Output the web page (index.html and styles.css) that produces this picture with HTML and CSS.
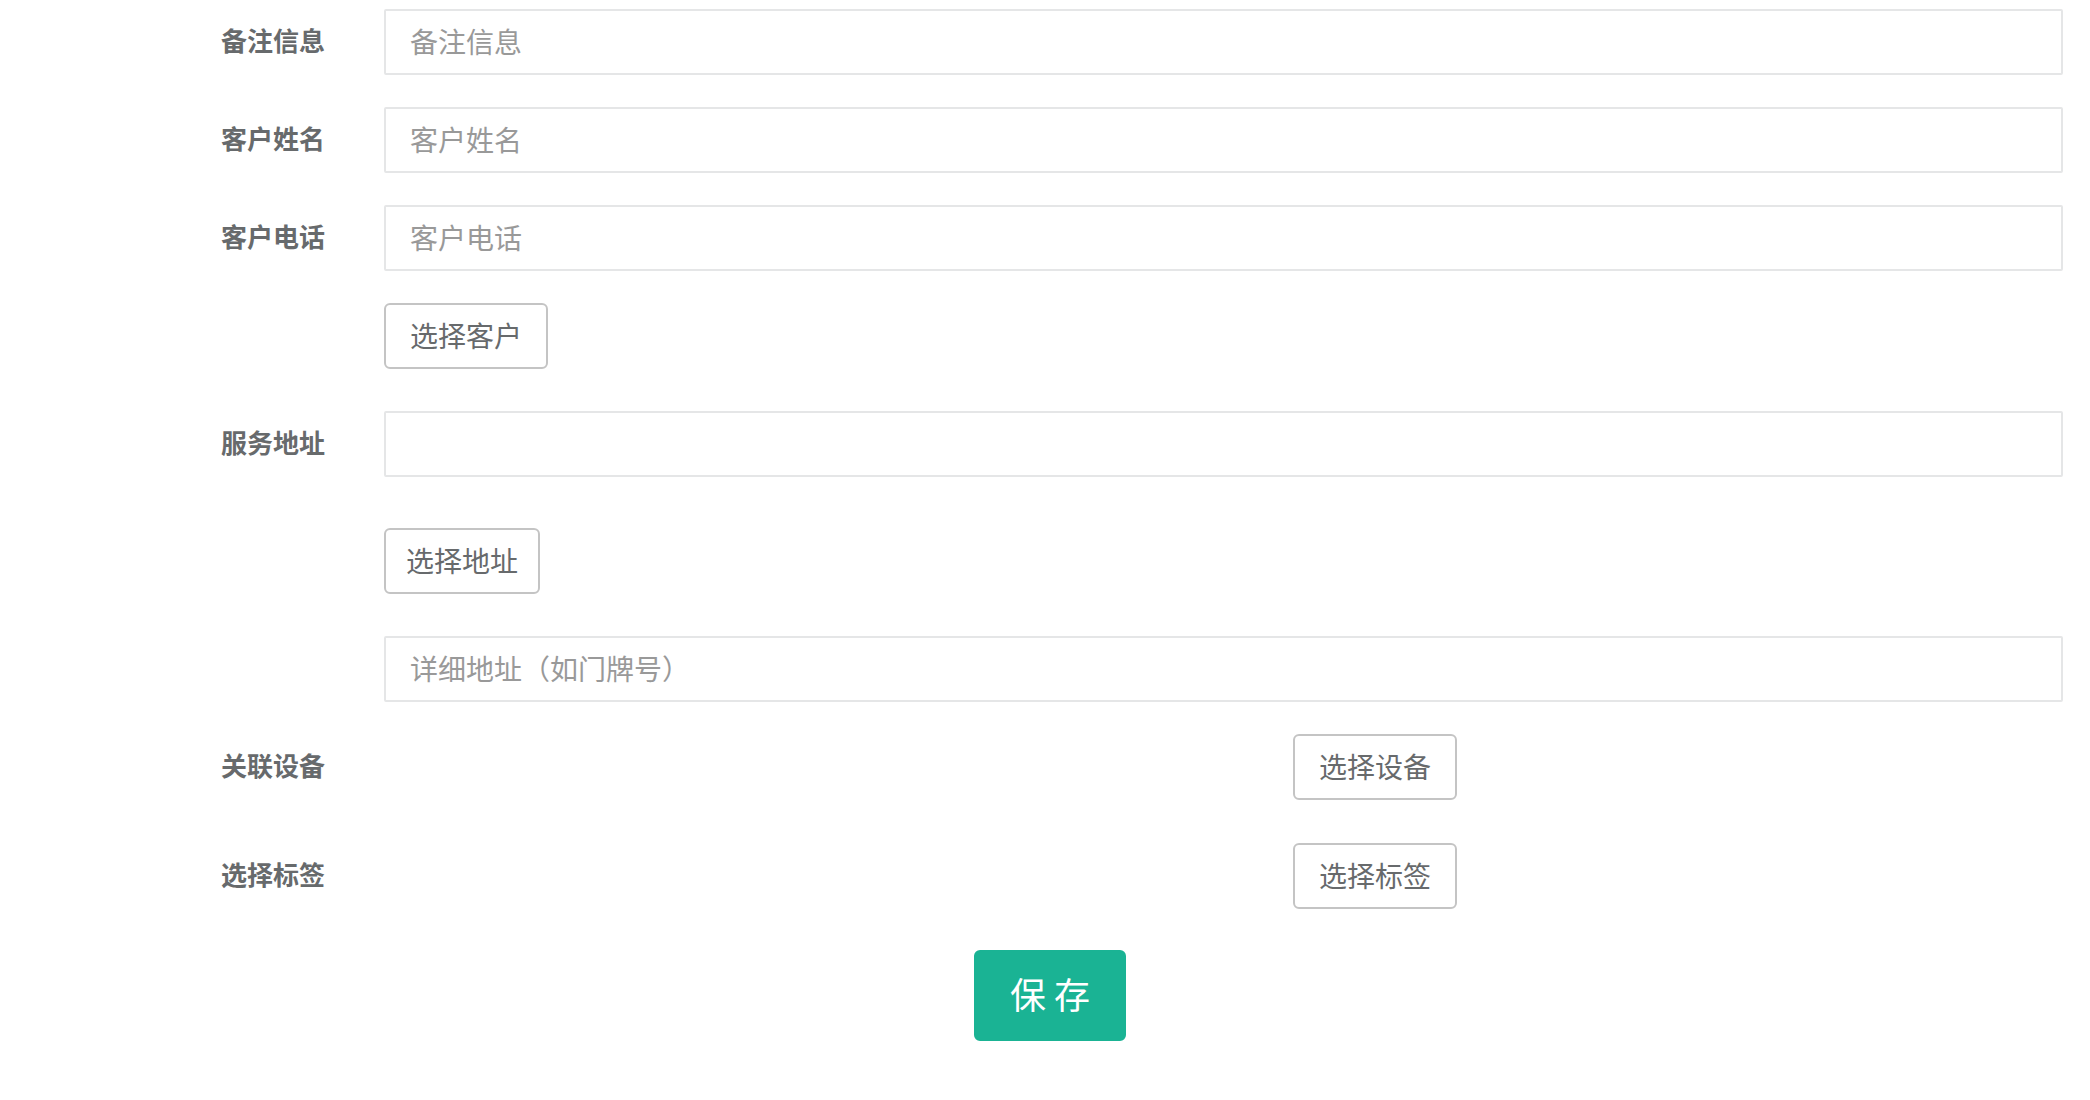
FILE: index.html
```html
<!DOCTYPE html>
<html lang="zh-CN">
<head>
<meta charset="utf-8">
<title>表单</title>
<link rel="stylesheet" href="styles.css">
</head>
<body>
<form class="form">
  <div class="row">
    <label class="label">备注信息</label>
    <div class="field"><input class="input" type="text" placeholder="备注信息"></div>
  </div>
  <div class="row">
    <label class="label">客户姓名</label>
    <div class="field"><input class="input" type="text" placeholder="客户姓名"></div>
  </div>
  <div class="row">
    <label class="label">客户电话</label>
    <div class="field"><input class="input" type="text" placeholder="客户电话"></div>
  </div>
  <div class="row">
    <span class="label"></span>
    <div class="field"><button type="button" class="btn">选择客户</button></div>
  </div>
  <div class="row row-service">
    <label class="label">服务地址</label>
    <div class="field"><input class="input" type="text"></div>
  </div>
  <div class="row row-pick-addr">
    <span class="label"></span>
    <div class="field"><button type="button" class="btn btn-narrow">选择地址</button></div>
  </div>
  <div class="row row-detail">
    <span class="label"></span>
    <div class="field"><input class="input" type="text" placeholder="详细地址（如门牌号）"></div>
  </div>
  <div class="row">
    <label class="label">关联设备</label>
    <div class="field field-offset"><button type="button" class="btn">选择设备</button></div>
  </div>
  <div class="row row-tag">
    <label class="label">选择标签</label>
    <div class="field field-offset"><button type="button" class="btn">选择标签</button></div>
  </div>
  <div class="save-row">
    <button type="button" class="btn-save">保 存</button>
  </div>
</form>
</body>
</html>
```

FILE: styles.css
```css
html, body {
  margin: 0;
  padding: 0;
  background: #ffffff;
}

body {
  width: 2090px;
  font-family: "Noto Sans CJK SC", "Liberation Sans", sans-serif;
  color: #676a6c;
}

.form {
  display: flex;
  flex-direction: column;
  gap: 32px;
  padding-top: 9px;
}

.row {
  display: grid;
  grid-template-columns: 163px 1679px;
  align-items: center;
  padding-left: 221px;
}

.row-service { margin-top: 10px; }
.row-pick-addr { margin-top: 19px; }
.row-detail { margin-top: 10px; }
.row-tag { margin-top: 11px; }

.label {
  font-size: 26px;
  font-weight: bold;
  color: #676a6c;
  line-height: 1;
  margin-bottom: 4px;
}

.field {
  display: flex;
  align-items: center;
}

.field-offset {
  padding-left: 909px;
}

.input {
  box-sizing: border-box;
  width: 100%;
  height: 66px;
  margin: 0;
  padding: 0 24px 3px;
  border: 2px solid #e5e6e7;
  border-radius: 2px;
  background: #ffffff;
  font-family: inherit;
  font-size: 28px;
  color: #676a6c;
  outline: none;
}

.input::placeholder {
  color: #999999;
}

.btn {
  box-sizing: border-box;
  height: 66px;
  margin: 0;
  padding: 0 24px 3px;
  border: 2px solid #c4c4c4;
  border-radius: 6px;
  background: #ffffff;
  font-family: inherit;
  font-size: 28px;
  line-height: 1;
  color: #676a6c;
  cursor: pointer;
}

.btn-narrow {
  padding: 0 20px 3px;
}

.save-row {
  display: flex;
  justify-content: center;
  padding-left: 10px;
  margin-top: 9px;
}

.btn-save {
  box-sizing: border-box;
  height: 91px;
  margin: 0;
  padding: 0 34px 6px;
  border: 2px solid #1ab394;
  border-radius: 6px;
  background: #1ab394;
  font-family: inherit;
  font-size: 36px;
  line-height: 1;
  color: #ffffff;
  cursor: pointer;
}
```
